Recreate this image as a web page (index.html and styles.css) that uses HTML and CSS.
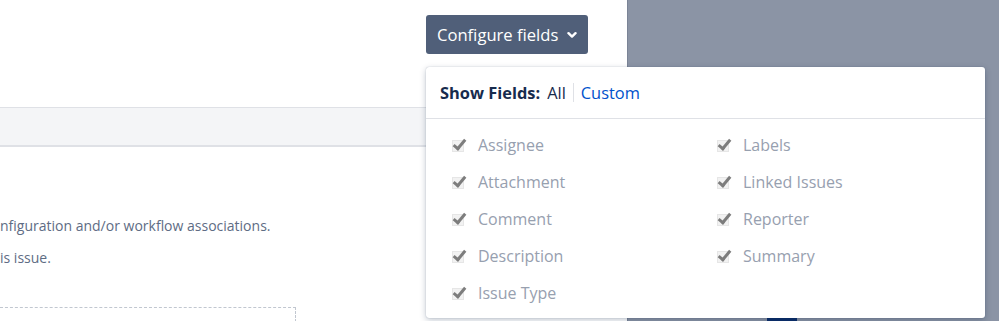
FILE: index.html
```html
<!DOCTYPE html>
<html lang="en">
<head>
    <meta charset="UTF-8">
    <title>Configure fields</title>
    <link rel="stylesheet" href="styles.css">
</head>
<body>
    <div class="page">
        <main class="main-content">
            <div class="toolbar">
                <div class="config">
                    <button class="config-btn">Configure fields
                        <svg class="chevron" width="10" height="10" viewBox="0 0 10 10"><path d="M1.5 3.2 5 6.6 8.5 3.2" fill="none" stroke="#fff" stroke-width="2.4" stroke-linecap="round" stroke-linejoin="round"/></svg>
                    </button>

                    <div class="fields-popup">
                        <div class="popup-header">
                            <span class="show-label">Show Fields:</span>
                            <span class="opt opt-all">All</span>
                            <span class="opt opt-custom">Custom</span>
                        </div>
                        <ul class="field-list">
                            <li><span class="check"></span>Assignee</li>
                            <li><span class="check"></span>Labels</li>
                            <li><span class="check"></span>Attachment</li>
                            <li><span class="check"></span>Linked Issues</li>
                            <li><span class="check"></span>Comment</li>
                            <li><span class="check"></span>Reporter</li>
                            <li><span class="check"></span>Description</li>
                            <li><span class="check"></span>Summary</li>
                            <li><span class="check"></span>Issue Type</li>
                        </ul>
                    </div>
                </div>
            </div>

            <div class="tab-bar"></div>

            <div class="notes">
                <p>nfiguration and/or workflow associations.</p>
                <p>is issue.</p>
            </div>

            <div class="drop-zone"></div>
        </main>

        <aside class="blanket">
            <div class="blanket-foot">
                <span class="foot-block"></span>
            </div>
        </aside>
    </div>
</body>
</html>
```

FILE: styles.css
```css
body {
    margin: 0;
    padding: 0;
    font-family: 'Open Sans', 'Noto Sans', sans-serif;
    color: #172b4d;
    overflow: hidden;
}

.page {
    display: flex;
    height: 321px;
}

.main-content {
    width: 627px;
    background-color: #ffffff;
    display: flex;
    flex-direction: column;
}

.main-content > * {
    flex-shrink: 0;
}

.toolbar {
    display: flex;
    justify-content: flex-end;
    padding: 15px 39px 0 0;
    height: 39px;
}

.config {
    position: relative;
}

.config-btn {
    display: flex;
    align-items: center;
    gap: 9px;
    height: 39px;
    width: 162px;
    padding: 0 0 0 11px;
    background-color: #505f79;
    color: #ffffff;
    border: none;
    border-radius: 3px;
    font-family: inherit;
    font-size: 16.6px;
    cursor: pointer;
}

.fields-popup {
    position: absolute;
    top: 52px;
    left: 0;
    width: 559px;
    height: 251px;
    background-color: #ffffff;
    border-radius: 3px;
    box-shadow: 0 2px 6px rgba(9, 30, 66, 0.25), 0 0 1px rgba(9, 30, 66, 0.35);
    z-index: 5;
}

.popup-header {
    display: flex;
    align-items: center;
    height: 51px;
    padding: 0 14px;
    border-bottom: 1px solid #dfe1e6;
    font-size: 16.4px;
}

.show-label {
    font-weight: 700;
    color: #172b4d;
}

.opt-all {
    margin-left: 7px;
    padding-right: 7px;
    border-right: 1px solid #dfe1e6;
    line-height: 19px;
}

.opt-custom {
    margin-left: 7px;
    color: #0052cc;
}

.field-list {
    list-style: none;
    margin: 0;
    padding: 7px 0 0 26px;
    display: grid;
    grid-template-columns: 265px 265px;
    grid-auto-rows: 37px;
}

.field-list li {
    display: flex;
    align-items: center;
    font-size: 16px;
    color: #97a0af;
}

.check {
    position: relative;
    width: 10px;
    height: 10px;
    margin: 2px 14px 0 0;
    border: 1px solid #e6e6e6;
    background-color: #f2f2f2;
}

.check::after {
    content: "";
    position: absolute;
    left: 3px;
    top: -4px;
    width: 4px;
    height: 10px;
    border-right: 3px solid #7d7d7d;
    border-bottom: 3px solid #7d7d7d;
    transform: rotate(40deg);
}

.tab-bar {
    margin: 53px 20px 0 0;
    height: 37px;
    background-color: #f4f5f7;
    border-top: 1px solid #dfe1e6;
    border-bottom: 2px solid #dfe1e6;
}

.notes {
    margin-top: 69px;
    font-size: 14px;
    color: #5e6c84;
}

.notes p {
    margin: 0 0 12px;
    line-height: 20px;
}

.drop-zone {
    margin-top: 27px;
    width: 295px;
    height: 14px;
    border-top: 1px dashed #c1c7d0;
    border-right: 1px dashed #c1c7d0;
}

.blanket {
    flex: 1;
    background-color: #8b94a5;
    border-left: 1px solid #7b8496;
    display: flex;
    flex-direction: column;
    justify-content: flex-end;
}

.blanket-foot {
    display: flex;
    height: 3px;
    padding-left: 139px;
    overflow: hidden;
}

.foot-block {
    width: 30px;
    height: 20px;
    background-color: #0b2e6b;
}
```
